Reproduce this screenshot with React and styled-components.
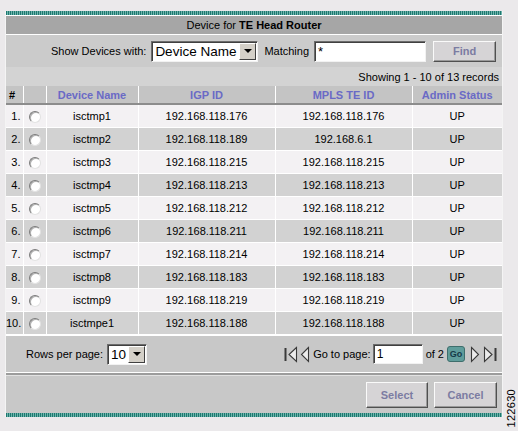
import React from 'react'
import styled, { createGlobalStyle } from 'styled-components'

const devices = [
  { name: 'isctmp1', igp: '192.168.118.176', te: '192.168.118.176' },
  { name: 'isctmp2', igp: '192.168.118.189', te: '192.168.6.1' },
  { name: 'isctmp3', igp: '192.168.118.215', te: '192.168.118.215' },
  { name: 'isctmp4', igp: '192.168.118.213', te: '192.168.118.213' },
  { name: 'isctmp5', igp: '192.168.118.212', te: '192.168.118.212' },
  { name: 'isctmp6', igp: '192.168.118.211', te: '192.168.118.211' },
  { name: 'isctmp7', igp: '192.168.118.214', te: '192.168.118.214' },
  { name: 'isctmp8', igp: '192.168.118.183', te: '192.168.118.183' },
  { name: 'isctmp9', igp: '192.168.118.219', te: '192.168.118.219' },
  { name: 'isctmpe1', igp: '192.168.118.188', te: '192.168.118.188' },
]

const Global = createGlobalStyle`
  body {
    margin: 0;
    background: #ebe9eb;
    font-family: "Liberation Sans", Arial, sans-serif;
    font-size: 11px;
    color: #000;
  }
`

const Page = styled.div`
  display: flex;
  align-items: flex-start;
  width: 518px;
  height: 431px;
  padding: 11px 0 0 5px;
  box-sizing: border-box;
`

const Panel = styled.div`
  width: 498px;
  display: flex;
  flex-direction: column;
  background: #c9c9c9;
  border-left: 1px solid #f4f4f4;
  border-right: 1px solid #f4f4f4;
  box-sizing: border-box;
`

const TealRule = styled.div`
  height: 4px;
  background: repeating-linear-gradient(90deg, #1d7870 0 1px, #6fb4ac 1px 2px);
  border-bottom: ${p => (p.top ? '1px solid #fff' : 'none')};
`

const TitleBar = styled.div`
  height: 18px;
  background: #a6a6a6;
  border-bottom: 1px solid #fff;
  display: flex;
  align-items: center;
  justify-content: center;
  font-size: 11px;
`

const FilterRow = styled.div`
  height: 32px;
  display: flex;
  align-items: center;
  padding-left: 45px;
  background: #cbcbcb;
`

const Label = styled.span`
  font-size: 11px;
  white-space: nowrap;
  margin-left: ${p => p.before || 0}px;
  margin-right: ${p => p.after || 0}px;
`

const Dropdown = styled.div`
  display: flex;
  align-items: stretch;
  height: 21px;
  width: ${p => p.width}px;
  background: #fff;
  border: 1px solid;
  border-color: #6c6c6c #f2f2f2 #f2f2f2 #6c6c6c;
  box-shadow: inset 1px 1px 0 #404040;
  box-sizing: border-box;
`

const DropdownText = styled.span`
  flex: 1;
  font-size: 13.5px;
  line-height: 19px;
  padding-left: 3px;
  white-space: nowrap;
`

const DropdownArrow = styled.span`
  width: 15px;
  flex: none;
  margin: 1px;
  background: #d4d0c8;
  border: 1px solid;
  border-color: #fff #404040 #404040 #fff;
  display: flex;
  align-items: center;
  justify-content: center;
  &::after {
    content: '';
    border-left: 4px solid transparent;
    border-right: 4px solid transparent;
    border-top: 4px solid #000;
  }
`

const TextBox = styled.div`
  width: ${p => p.width}px;
  height: ${p => p.height || 21}px;
  background: #fff;
  border: 1px solid;
  border-color: #6c6c6c #f2f2f2 #f2f2f2 #6c6c6c;
  box-shadow: inset 1px 1px 0 #404040;
  box-sizing: border-box;
  font-size: ${p => p.size || 13}px;
  line-height: ${p => (p.height || 21) - 2}px;
  padding-left: 3px;
  margin-right: ${p => p.after || 0}px;
`

const Button = styled.button`
  width: ${p => p.width}px;
  height: ${p => p.height}px;
  margin-left: ${p => p.offset || 0}px;
  background: #d6d4d6;
  border: 1px solid;
  border-color: #fafafa #505050 #505050 #fafafa;
  box-shadow: inset -1px -1px 0 #9a9a9a;
  font-family: "Liberation Sans", Arial, sans-serif;
  font-size: 11px;
  font-weight: bold;
  color: #7c7ca2;
  padding: 0;
`

const RecordCount = styled.div`
  height: 19px;
  background: #d3d3d3;
  display: flex;
  align-items: center;
  justify-content: flex-end;
  padding-right: 3px;
  font-size: 11px;
`

const Table = styled.table`
  width: 100%;
  border-collapse: collapse;
  table-layout: fixed;
`

const Head = styled.th`
  height: 17px;
  padding: 0;
  background: #c4c4c4;
  border-left: 1px solid #fff;
  border-bottom: 2px solid #8c8c8c;
  color: #6a6ac6;
  font-size: 11px;
  font-weight: bold;
  text-align: ${p => p.align || 'center'};
  padding-left: ${p => (p.align === 'left' ? 3 : 0)}px;
  &:first-child {
    border-left: none;
    color: #000;
  }
`

const Row = styled.tr`
  background: ${p => (p.odd ? '#f3f1f3' : '#d2d2d2')};
`

const Cell = styled.td`
  height: 22px;
  padding: 0;
  border-left: 1px solid #fff;
  border-bottom: 1px solid #fff;
  text-align: ${p => p.align || 'center'};
  padding-right: ${p => (p.align === 'right' ? 2 : 0)}px;
  font-size: 11px;
  &:first-child {
    border-left: none;
  }
`

const Radio = styled.span`
  display: inline-block;
  vertical-align: middle;
  width: 12px;
  height: 12px;
  border-radius: 50%;
  background: #fff;
  box-sizing: border-box;
  border: 1px solid;
  border-color: #7a7a7a #e2e2e2 #e2e2e2 #7a7a7a;
  box-shadow: inset 1px 1px 0 #b0b0b0;
`

const Pager = styled.div`
  height: 37px;
  display: flex;
  align-items: center;
  background: #c8c8c8;
  padding: 0 5px 0 20px;
  border-top: 1px solid #fff;
  box-sizing: border-box;
`

const RowsPerPage = styled.div`
  display: flex;
  align-items: center;
  gap: 4px;
  flex: 1;
`

const Nav = styled.div`
  display: flex;
  align-items: center;
`

const NavIcon = styled.svg`
  flex: none;
  margin-right: ${p => p.after || 0}px;
`

const GoButton = styled.span`
  width: 18px;
  height: 16px;
  border-radius: 3px;
  background: #5f9d9b;
  border: 1px solid #3e6e6c;
  box-sizing: border-box;
  color: #153a48;
  font-size: 9px;
  font-weight: bold;
  display: flex;
  align-items: center;
  justify-content: center;
  margin: 0 5px 0 3px;
`

const Divider = styled.div`
  height: 4px;
  border-top: 1px solid #fff;
  background: #9c9c9c;
  border-bottom: 1px solid #e2e2e2;
  box-sizing: border-box;
`

const Actions = styled.div`
  height: 37px;
  display: flex;
  align-items: center;
  justify-content: flex-end;
  padding-right: 5px;
  background: #c8c8c8;
`

const Side = styled.div`
  margin: 378px 0 0 2px;
  writing-mode: vertical-rl;
  transform: rotate(180deg);
  font-size: 11px;
  letter-spacing: 0.3px;
`

const PageIcon = ({ dir, edge, after }) => {
  const w = edge ? 14 : 10
  const tri = dir === 'left'
    ? (edge ? '12.5,1.5 5,8.5 12.5,15.5' : '8.5,1.5 1.5,8.5 8.5,15.5')
    : (edge ? '1.5,1.5 9,8.5 1.5,15.5' : '1.5,1.5 8.5,8.5 1.5,15.5')
  const barX = dir === 'left' ? 1.5 : 12.5
  return (
    <NavIcon width={w} height="17" viewBox={`0 0 ${w} 17`} after={after}>
      <polygon points={tri} fill="#ececec" stroke="#3a3a3a" strokeWidth="1.1" />
      {edge && <rect x={barX - 1} y="2" width="2" height="13" fill="#3a3a3a" />}
    </NavIcon>
  )
}

const App = () => (
  <>
    <Global />
    <Page>
      <Panel>
        <TealRule top />
        <TitleBar>
          Device for&nbsp;<b>TE Head Router</b>
        </TitleBar>
        <FilterRow>
          <Label after={5}>Show Devices with:</Label>
          <Dropdown width={107}>
            <DropdownText>Device Name</DropdownText>
            <DropdownArrow />
          </Dropdown>
          <Label before={6} after={5}>Matching</Label>
          <TextBox width={112}>*</TextBox>
          <Button width={63} height={21} offset={7}>Find</Button>
        </FilterRow>
        <RecordCount>Showing 1 - 10 of 13 records</RecordCount>
        <Table>
          <colgroup>
            <col style={{ width: 17 }} />
            <col style={{ width: 23 }} />
            <col style={{ width: 92 }} />
            <col style={{ width: 137 }} />
            <col style={{ width: 137 }} />
            <col />
          </colgroup>
          <thead>
            <tr>
              <Head align="left">#</Head>
              <Head />
              <Head>Device Name</Head>
              <Head>IGP ID</Head>
              <Head>MPLS TE ID</Head>
              <Head>Admin Status</Head>
            </tr>
          </thead>
          <tbody>
            {devices.map((d, i) => (
              <Row key={d.name} odd={i % 2 === 0}>
                <Cell align="right">{i + 1}.</Cell>
                <Cell><Radio /></Cell>
                <Cell>{d.name}</Cell>
                <Cell>{d.igp}</Cell>
                <Cell>{d.te}</Cell>
                <Cell>UP</Cell>
              </Row>
            ))}
          </tbody>
        </Table>
        <Pager>
          <RowsPerPage>
            <Label>Rows per page:</Label>
            <Dropdown width={40}>
              <DropdownText>10</DropdownText>
              <DropdownArrow />
            </Dropdown>
          </RowsPerPage>
          <Nav>
            <PageIcon dir="left" edge after={2} />
            <PageIcon dir="left" after={3} />
            <Label after={2}>Go to page:</Label>
            <TextBox width={50} height={20} size={12} after={3}>1</TextBox>
            <Label>of 2</Label>
            <GoButton>Go</GoButton>
            <PageIcon dir="right" after={3} />
            <PageIcon dir="right" edge />
          </Nav>
        </Pager>
        <Divider />
        <Actions>
          <Button width={62} height={26}>Select</Button>
          <Button width={63} height={26} offset={6}>Cancel</Button>
        </Actions>
        <TealRule />
      </Panel>
      <Side>122630</Side>
    </Page>
  </>
)

export default App
